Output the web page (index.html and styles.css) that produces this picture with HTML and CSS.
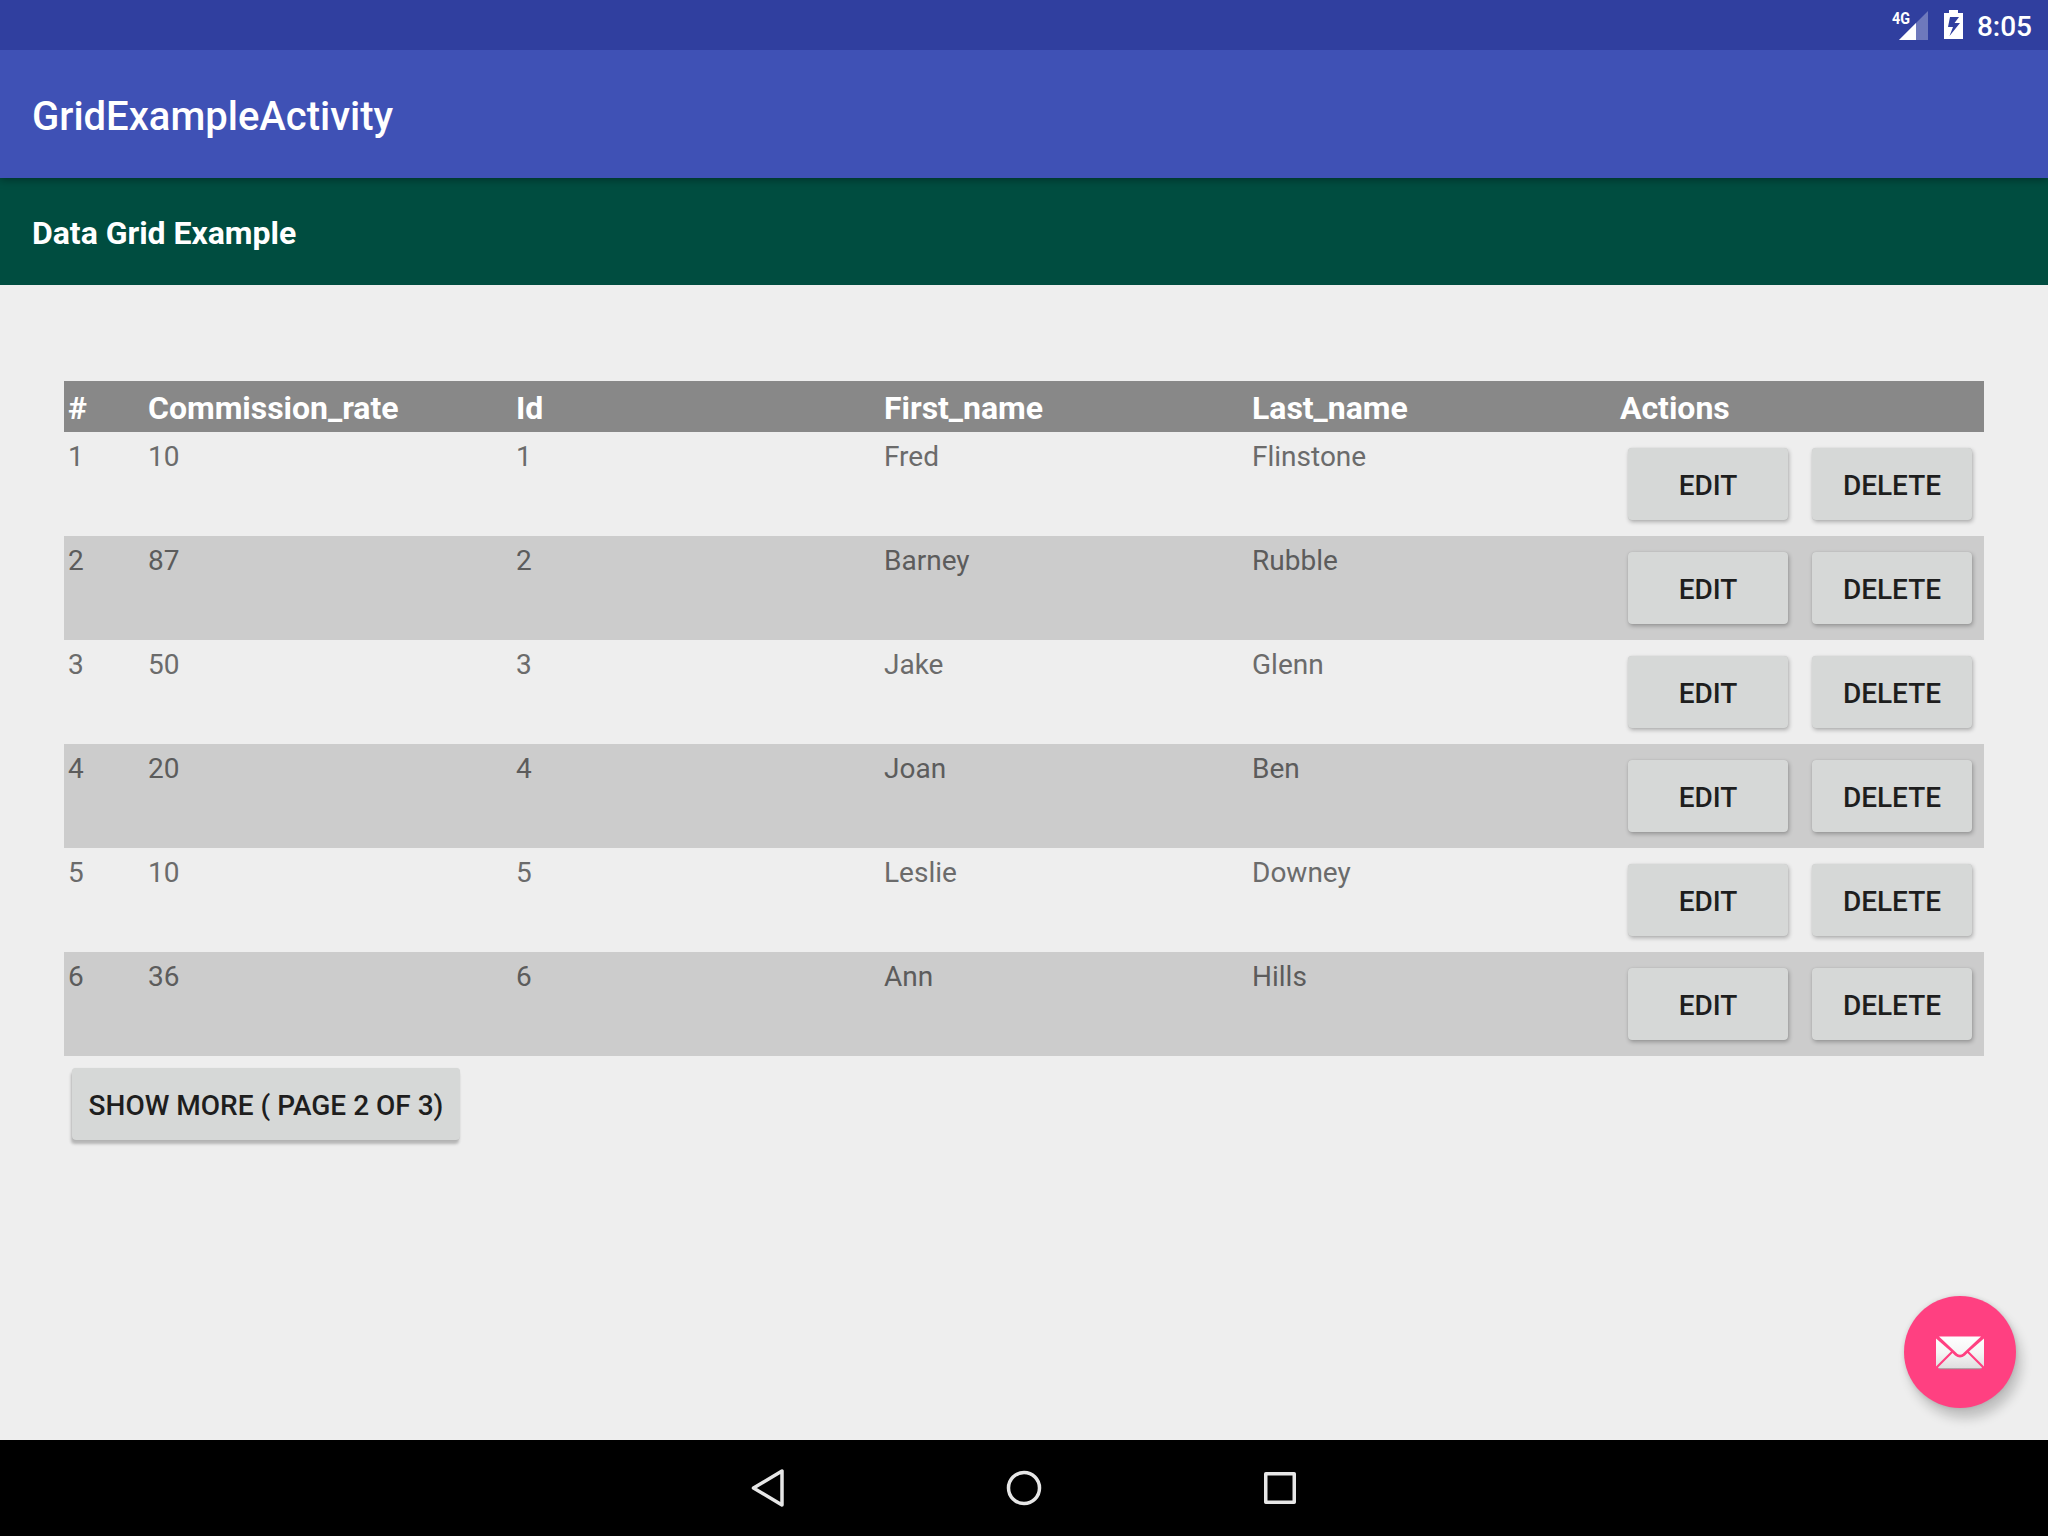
FILE: index.html
```html
<!DOCTYPE html>
<html lang="en">
<head>
<meta charset="utf-8">
<title>GridExampleActivity</title>
<link rel="stylesheet" href="styles.css">
</head>
<body>
<div class="screen">
  <header class="status">
    <svg class="signal" width="38" height="32" viewBox="0 0 38 32">
      <path d="M36 3V32H7z" fill="#fff" fill-opacity=".3"/>
      <path d="M24 15V32H7z" fill="#fff"/>
      <text class="net" x="0" y="16" textLength="18" lengthAdjust="spacingAndGlyphs">4G</text>
    </svg>
    <svg class="battery" width="20" height="30" viewBox="0 0 20 30">
      <path fill="#fff" fill-rule="evenodd" d="M5 0h9v3h5v26H0V3h5zM6 7L4 17h5L5.500 26 16 13h-5.500L15 7z"/>
    </svg>
    <span class="clock">8:05</span>
  </header>
  <div class="appbar"><h1>GridExampleActivity</h1></div>
  <div class="subbar"><h2>Data Grid Example</h2></div>
  <main class="content">
    <div class="grid">
      <div class="row head"><span>#</span><span>Commission_rate</span><span>Id</span><span>First_name</span><span>Last_name</span><span>Actions</span></div>
      <div class="row"><span>1</span><span>10</span><span>1</span><span>Fred</span><span>Flinstone</span><div class="actions"><button class="btn">EDIT</button><button class="btn">DELETE</button></div></div>
      <div class="row alt"><span>2</span><span>87</span><span>2</span><span>Barney</span><span>Rubble</span><div class="actions"><button class="btn">EDIT</button><button class="btn">DELETE</button></div></div>
      <div class="row"><span>3</span><span>50</span><span>3</span><span>Jake</span><span>Glenn</span><div class="actions"><button class="btn">EDIT</button><button class="btn">DELETE</button></div></div>
      <div class="row alt"><span>4</span><span>20</span><span>4</span><span>Joan</span><span>Ben</span><div class="actions"><button class="btn">EDIT</button><button class="btn">DELETE</button></div></div>
      <div class="row"><span>5</span><span>10</span><span>5</span><span>Leslie</span><span>Downey</span><div class="actions"><button class="btn">EDIT</button><button class="btn">DELETE</button></div></div>
      <div class="row alt"><span>6</span><span>36</span><span>6</span><span>Ann</span><span>Hills</span><div class="actions"><button class="btn">EDIT</button><button class="btn">DELETE</button></div></div>
    </div>
    <button class="btn more">SHOW MORE ( PAGE 2 OF 3)</button>
    <button class="fab" aria-label="Mail">
      <svg width="48" height="34" viewBox="0 0 48 34">
        <defs><linearGradient id="paper" x1="0" y1="0" x2="0" y2="34" gradientUnits="userSpaceOnUse"><stop offset="0" stop-color="#fff"/><stop offset=".5" stop-color="#f5f5f5"/><stop offset="1" stop-color="#dcdcdc"/></linearGradient></defs>
        <g fill="url(#paper)">
          <path d="M3 0.500H45L27 17.500Q24 20 21 17.500z"/>
          <path d="M0 2.500L15 15.500 0 30.500z"/>
          <path d="M48 2.500L33 15.500 48 30.500z"/>
          <path d="M16.500 17L19 19.500Q24 23.500 29 19.500L31.500 17 46 31.500Q45 33 43.500 33H4.500Q3 33 2 31.500z"/>
        </g>
        <path d="M3 32.800H45" stroke="#a08a92" stroke-width="1"/>
      </svg>
    </button>
  </main>
  <nav class="navbar">
    <svg width="40" height="40" viewBox="0 0 40 40"><path d="M5.500 20L34 3V37z"/></svg>
    <svg width="40" height="40" viewBox="0 0 40 40"><circle cx="20" cy="20" r="15.500"/></svg>
    <svg width="40" height="40" viewBox="0 0 40 40"><rect x="5.750" y="5.750" width="28.500" height="28.500"/></svg>
  </nav>
</div>
</body>
</html>
```
FILE: styles.css
```css
* { box-sizing: border-box; }
body { margin: 0; font-family: Roboto, sans-serif; background: #eee; }
.screen { width: 2048px; height: 1536px; display: flex; flex-direction: column; overflow: hidden; }

.status { height: 50px; background: #303f9f; display: flex; align-items: flex-start; padding: 8px 16px 0 0; justify-content: flex-end; color: #fff; position: relative; z-index: 2; }
.signal { margin-right: 14px; }
.net { font: 700 17px Roboto, sans-serif; fill: #fff; }
.battery { margin: 2px 13px 0 0; }
.clock { font-size: 28px; font-weight: 500; line-height: 38px; }

.appbar { height: 128px; background: #3f51b5; color: #fff; padding: 0 32px; display: flex; align-items: center; box-shadow: 0 2px 8px rgba(0, 0, 0, .35); position: relative; z-index: 1; }
.appbar h1 { margin: 6px 0 0; font-size: 40px; font-weight: 500; line-height: 48px; }
.subbar { height: 107px; background: #004d40; color: #fff; padding: 0 32px; display: flex; align-items: center; }
.subbar h2 { margin: 2px 0 0; font-size: 32px; font-weight: 700; line-height: 38px; letter-spacing: -.03px; }

.content { flex: 1; padding: 96px 64px 0; position: relative; }
.row { display: grid; grid-template-columns: 80px repeat(5, 368px); height: 104px; color: #6b6b6b; font-size: 28px; line-height: 33px; }
.row > span { padding: 8px 4px 0; }
.row.alt { background: #ccc; color: #5c5c5c; }
.row.head { height: 51px; background: #888; color: #fff; font-size: 32px; font-weight: 700; line-height: 38px; letter-spacing: -.03px; }
.actions { display: flex; gap: 24px; padding: 16px 12px; }

.btn { border: 0; width: 160px; height: 72px; padding: 3px 0 0; border-radius: 4px; background: #d6d8d7; color: #1e1e1e; font: 500 28px/33px Roboto, sans-serif; white-space: nowrap; box-shadow: 1px 2px 4px rgba(0, 0, 0, .28), 0 0 1px rgba(0, 0, 0, .15); }
.more { display: block; width: 388px; margin: 12px 0 0 8px; box-shadow: -1px 4px 3px rgba(0, 0, 0, .24), 0 0 1px rgba(0, 0, 0, .12); }

.fab { position: absolute; right: 32px; bottom: 32px; width: 112px; height: 112px; padding: 2px 0 0; border: 0; border-radius: 50%; background: #ff4081; display: flex; align-items: center; justify-content: center; box-shadow: 5px 10px 12px rgba(0, 0, 0, .2), 0 0 5px rgba(0, 0, 0, .12); }

.navbar { height: 96px; background: #000; display: flex; align-items: center; justify-content: center; gap: 216px; }
.navbar svg { fill: none; stroke: #e6e6e6; stroke-width: 3.500; stroke-linejoin: round; }
```
